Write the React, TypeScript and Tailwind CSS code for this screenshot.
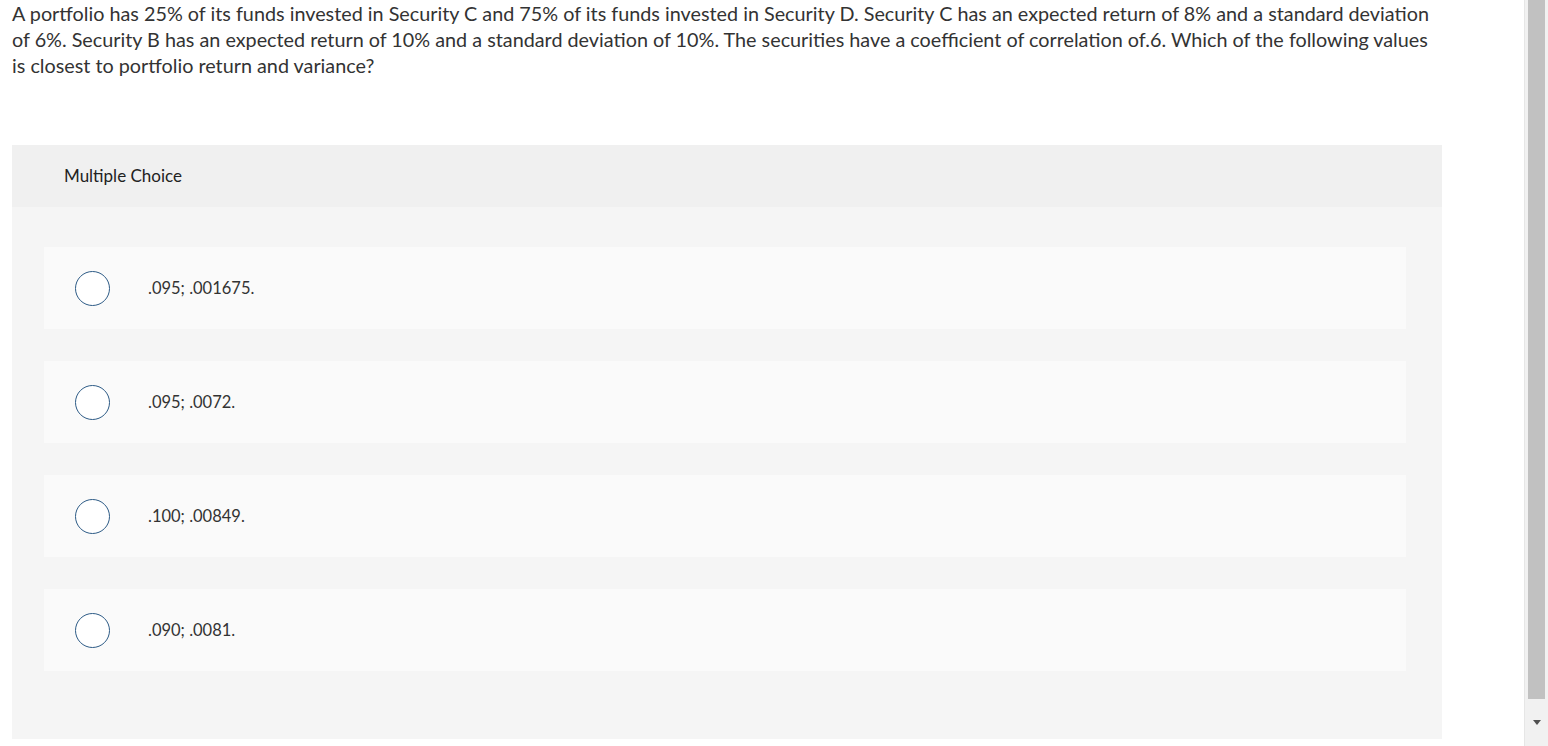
const options = ['.095; .001675.', '.095; .0072.', '.100; .00849.', '.090; .0081.'];

export default function App() {
  return (
    <div className="flex h-[746px] w-full overflow-hidden bg-white font-['Lato',sans-serif] text-[#333]">
      <div className="flex-1 min-w-0">
        <p className="pl-3 pr-[88px] pt-0 text-[19.8px] leading-[26px] text-[#333]">
          A portfolio has 25% of its funds invested in Security C and 75% of its funds invested in Security D. Security C has an expected return of 8% and a standard deviation of 6%. Security B has an expected return of 10% and a standard deviation of 10%. The securities have a coefficient of correlation of.6. Which of the following values is closest to portfolio return and variance?
        </p>

        {/* Multiple choice card */}
        <div className="ml-3 mr-[82px] mt-[67px] bg-[#f5f5f5] pb-[68px]">
          <div className="flex h-[62px] items-center bg-[#f0f0f0] pl-[52px] text-[17px] text-[#222]">
            Multiple Choice
          </div>
          <div className="flex flex-col gap-8 pl-8 pr-9 pt-10">
            {options.map((opt) => (
              <div key={opt} className="flex h-[82px] items-center bg-[#fafafa] pl-[31px]">
                <span className="h-[35px] w-[35px] shrink-0 rounded-full border border-[#2d5b86] bg-white" />
                <span className="ml-[38px] text-[16.5px] text-[#333]">{opt}</span>
              </div>
            ))}
          </div>
        </div>
      </div>

      {/* Scrollbar */}
      <div className="flex w-[24px] shrink-0 flex-col border-l border-[#e6e6e6] bg-[#f1f1f1]">
        <div className="mx-auto h-[699px] w-[17px] bg-[#c1c1c1]" />
        <div className="flex flex-1 items-center justify-center">
          <svg width="10" height="6" viewBox="0 0 10 6">
            <path d="M1 0h8L5 5z" fill="#505050" />
          </svg>
        </div>
      </div>
    </div>
  );
}
